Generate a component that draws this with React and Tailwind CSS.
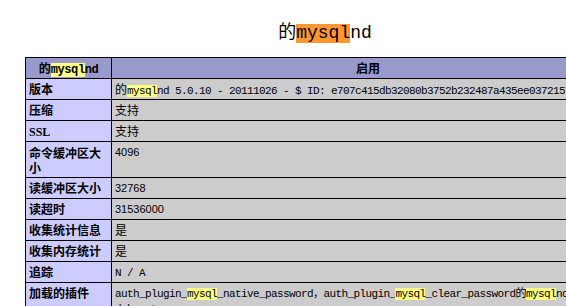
import React from "react";

const CJK = "font-['Noto_Sans_CJK_SC',sans-serif]";
const MONO = "font-['Liberation_Mono','Noto_Sans_CJK_SC',monospace] text-[11px] tracking-[-0.6px]";
const Y = ({ children }) => <span className="bg-[#ffff80]">{children}</span>;

const cell = "border border-black px-[3px] py-[3px] leading-[14px] align-top text-[12px]";
const eCell = `${cell} bg-[#ccccff] font-bold text-left ${CJK}`;
const vCell = `${cell} bg-[#cccccc] font-normal`;

function Row({ label, children, h = "h-[14px]", labelClass = "" }) {
  return (
    <tr>
      <td className={eCell}>
        <div className={`${h} ${labelClass}`}>{label}</div>
      </td>
      <td className={vCell}>
        <div className={h}>{children}</div>
      </td>
    </tr>
  );
}

export default function App() {
  return (
    <div className="w-[566px] h-[306px] overflow-hidden bg-white text-black font-['Liberation_Sans','Noto_Sans_CJK_SC',sans-serif]">
      <div className="w-[650px]">
        <h2 className="h-[57px] pt-[21px] text-center text-[18px] leading-[19px] font-normal">
          <span className={CJK}>的</span>
          <span className="font-['Liberation_Mono',monospace]">
            <span className="bg-[#ff9632] inline-block h-[19px] leading-[19px]">mysql</span>nd
          </span>
        </h2>
        <table className="mx-auto w-[600px] border-collapse table-fixed">
          <colgroup>
            <col className="w-[86px]" />
            <col />
          </colgroup>
          <tbody>
            <tr className="bg-[#9999cc]">
              <th className={`${cell} font-bold text-center`}>
                <div className="h-[14px]">
                  <span className={CJK}>的</span>
                  <span className="font-['Liberation_Mono',monospace] text-[12px] tracking-[-0.4px]">
                    <Y>mysql</Y>nd
                  </span>
                </div>
              </th>
              <th className={`${cell} font-bold text-center ${CJK}`}>
                <div className="h-[14px]">启用</div>
              </th>
            </tr>
            <Row label="版本">
              <span className={CJK}>的</span>
              <span className={MONO}>
                <Y>mysql</Y>nd 5.0.10 - 20111026 - $ ID: e707c415db32080b3752b232487a435ee0372157 $
              </span>
            </Row>
            <Row label="压缩">
              <span className={CJK}>支持</span>
            </Row>
            <Row label={<span className="font-['Liberation_Serif',serif]">SSL</span>}>
              <span className={CJK}>支持</span>
            </Row>
            <Row label="命令缓冲区大小" h="h-[29px]" labelClass="leading-[15px]">
              <span className="text-[11px]">4096</span>
            </Row>
            <Row label="读缓冲区大小">
              <span className="text-[11px]">32768</span>
            </Row>
            <Row label="读超时">
              <span className="text-[11px]">31536000</span>
            </Row>
            <Row label="收集统计信息">
              <span className={CJK}>是</span>
            </Row>
            <Row label="收集内存统计">
              <span className={CJK}>是</span>
            </Row>
            <Row label="追踪">
              <span className={MONO}>N / A</span>
            </Row>
            <Row label="加载的插件" h="h-[28px]">
              <span className={MONO}>
                auth_plugin_<Y>mysql</Y>_native_password，auth_plugin_<Y>mysql</Y>_clear_password的<Y>mysql</Y>nd debug_trace;
              </span>
            </Row>
          </tbody>
        </table>
      </div>
    </div>
  );
}
